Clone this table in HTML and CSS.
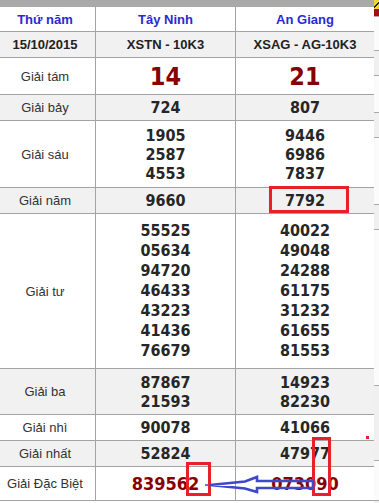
FILE: index.html
```html
<!DOCTYPE html>
<html lang="vi">
<head>
<meta charset="utf-8">
<title>Kết quả xổ số</title>
<link rel="stylesheet" href="styles.css">
</head>
<body>
<div class="page">
  <div class="main">
    <div class="topbar"></div>
    <div class="board">
      <div class="cell c1 head">Thứ năm</div>
      <div class="cell c2 head">Tây Ninh</div>
      <div class="cell c3 head">An Giang</div>

      <div class="cell c1 alt date">15/10/2015</div>
      <div class="cell c2 alt date">XSTN - 10K3</div>
      <div class="cell c3 alt date">XSAG - AG-10K3</div>

      <div class="cell c1 label">Giải tám</div>
      <div class="cell c2 num big">14</div>
      <div class="cell c3 num big">21</div>

      <div class="cell c1 alt label">Giải bảy</div>
      <div class="cell c2 alt num">724</div>
      <div class="cell c3 alt num">807</div>

      <div class="cell c1 label">Giải sáu</div>
      <div class="cell c2 num"><span>1905</span><span>2587</span><span>4553</span></div>
      <div class="cell c3 num"><span>9446</span><span>6986</span><span>7837</span></div>

      <div class="cell c1 alt label">Giải năm</div>
      <div class="cell c2 alt num">9660</div>
      <div class="cell c3 alt num">7792</div>

      <div class="cell c1 label">Giải tư</div>
      <div class="cell c2 num tall"><span>55525</span><span>05634</span><span>94720</span><span>46433</span><span>43223</span><span>41436</span><span>76679</span></div>
      <div class="cell c3 num tall"><span>40022</span><span>49048</span><span>24288</span><span>61175</span><span>31232</span><span>61655</span><span>81553</span></div>

      <div class="cell c1 alt label">Giải ba</div>
      <div class="cell c2 alt num"><span>87867</span><span>21593</span></div>
      <div class="cell c3 alt num"><span>14923</span><span>82230</span></div>

      <div class="cell c1 label">Giải nhì</div>
      <div class="cell c2 num">90078</div>
      <div class="cell c3 num">41066</div>

      <div class="cell c1 alt label">Giải nhất</div>
      <div class="cell c2 alt num">52824</div>
      <div class="cell c3 alt num">47977</div>

      <div class="cell c1 label">Giải Đặc Biệt</div>
      <div class="cell c2 num db">839562</div>
      <div class="cell c3 num db">073090</div>
    </div>
  </div>
  <div class="side">
    <div class="s-icon"></div>
    <div class="s-red"></div>
    <div class="s-row s-white h34"></div>
    <div class="s-row h25"></div>
    <div class="s-row s-white h37"></div>
    <div class="s-row h25"></div>
    <div class="s-row s-white h67"></div>
    <div class="s-row h25"></div>
    <div class="s-row s-white h156"></div>
    <div class="s-row h75"></div>
    <div class="s-row s-white h40"></div>
  </div>

  <div class="mark box-a"></div>
  <div class="mark box-b"></div>
  <div class="mark box-c"></div>
  <div class="dot"></div>
  <svg class="arrow" width="120" height="30" viewBox="0 0 120 30">
    <line x1="5" y1="15" x2="8" y2="15" stroke="#3f48cc" stroke-width="1.5"/>
    <path d="M10 15 L45 11.5 L57 7 L57 11 L113 11 L113 18 L57 18 L57 22 L45 18.5 Z" fill="none" stroke="#3f48cc" stroke-width="2.6" stroke-linejoin="miter"/>
  </svg>
</div>
</body>
</html>
```
FILE: styles.css
```css
html, body {
  margin: 0;
  padding: 0;
  background: #fff;
}
body {
  font-family: "Liberation Sans", Arial, sans-serif;
}
.page {
  position: relative;
  display: flex;
  width: 379px;
  height: 503px;
  overflow: hidden;
}
.main {
  width: 374px;
  flex: none;
}
.topbar {
  height: 7px;
  background: #a9a9a9;
}
.board {
  display: grid;
  grid-template-columns: 96px 140px 138px;
  grid-template-rows: 25px 26px 37px 26px 67px 26px 155px 46px 26px 26px 34px;
}
.cell {
  box-sizing: border-box;
  border-bottom: 1px solid #a3a3a3;
  display: flex;
  flex-direction: column;
  align-items: center;
  justify-content: center;
  text-align: center;
  white-space: nowrap;
}
.c1, .c2 {
  border-right: 1px solid #a3a3a3;
}
.alt {
  background: #f1f1f1;
}
.head {
  font-size: 13px;
  font-weight: bold;
  color: #2a2ad4;
}
.c1.head, .c1.date, .label {
  padding-right: 5px;
}
.date {
  font-size: 13px;
  font-weight: bold;
  color: #222;
}
.label {
  font-size: 13px;
  color: #333;
}
.num {
  font-family: "DejaVu Sans Condensed", "DejaVu Sans", Tahoma, sans-serif;
  font-weight: bold;
  font-size: 16px;
  line-height: 19px;
  color: #262626;
}
.num span {
  display: block;
}
.tall {
  line-height: 20px;
}
.big {
  font-size: 25px;
  color: #870000;
}
.db {
  font-size: 18px;
  color: #870000;
}
.side {
  width: 5px;
  flex: none;
  display: flex;
  flex-direction: column;
  background: #f0f0f0;
}
.s-icon {
  height: 9px;
  background: linear-gradient(135deg, #f3d23a 0 45%, #222 45% 60%, #f3d23a 60%);
}
.s-red {
  height: 7px;
  background: #9e1212;
  border-bottom: 1px solid #c9a0a0;
}
.s-row {
  box-sizing: border-box;
  border-bottom: 1px solid #a9a9a9;
}
.s-white { background: #fbfbfb; }
.h25 { height: 25px; }
.h34 { height: 34px; }
.h37 { height: 37px; }
.h40 { height: 40px; }
.h67 { height: 67px; }
.h75 { height: 75px; }
.h156 { height: 156px; }
.mark {
  position: absolute;
  box-sizing: border-box;
  border: 3px solid #e8202a;
}
.box-a {
  left: 269px;
  top: 186px;
  width: 80px;
  height: 27px;
}
.box-b {
  left: 312px;
  top: 437px;
  width: 19px;
  height: 59px;
}
.box-c {
  left: 186px;
  top: 462px;
  width: 25px;
  height: 34px;
}
.dot {
  position: absolute;
  left: 366px;
  top: 436px;
  width: 3px;
  height: 3px;
  background: #e8202a;
}
.arrow {
  position: absolute;
  left: 200px;
  top: 470px;
}
```
